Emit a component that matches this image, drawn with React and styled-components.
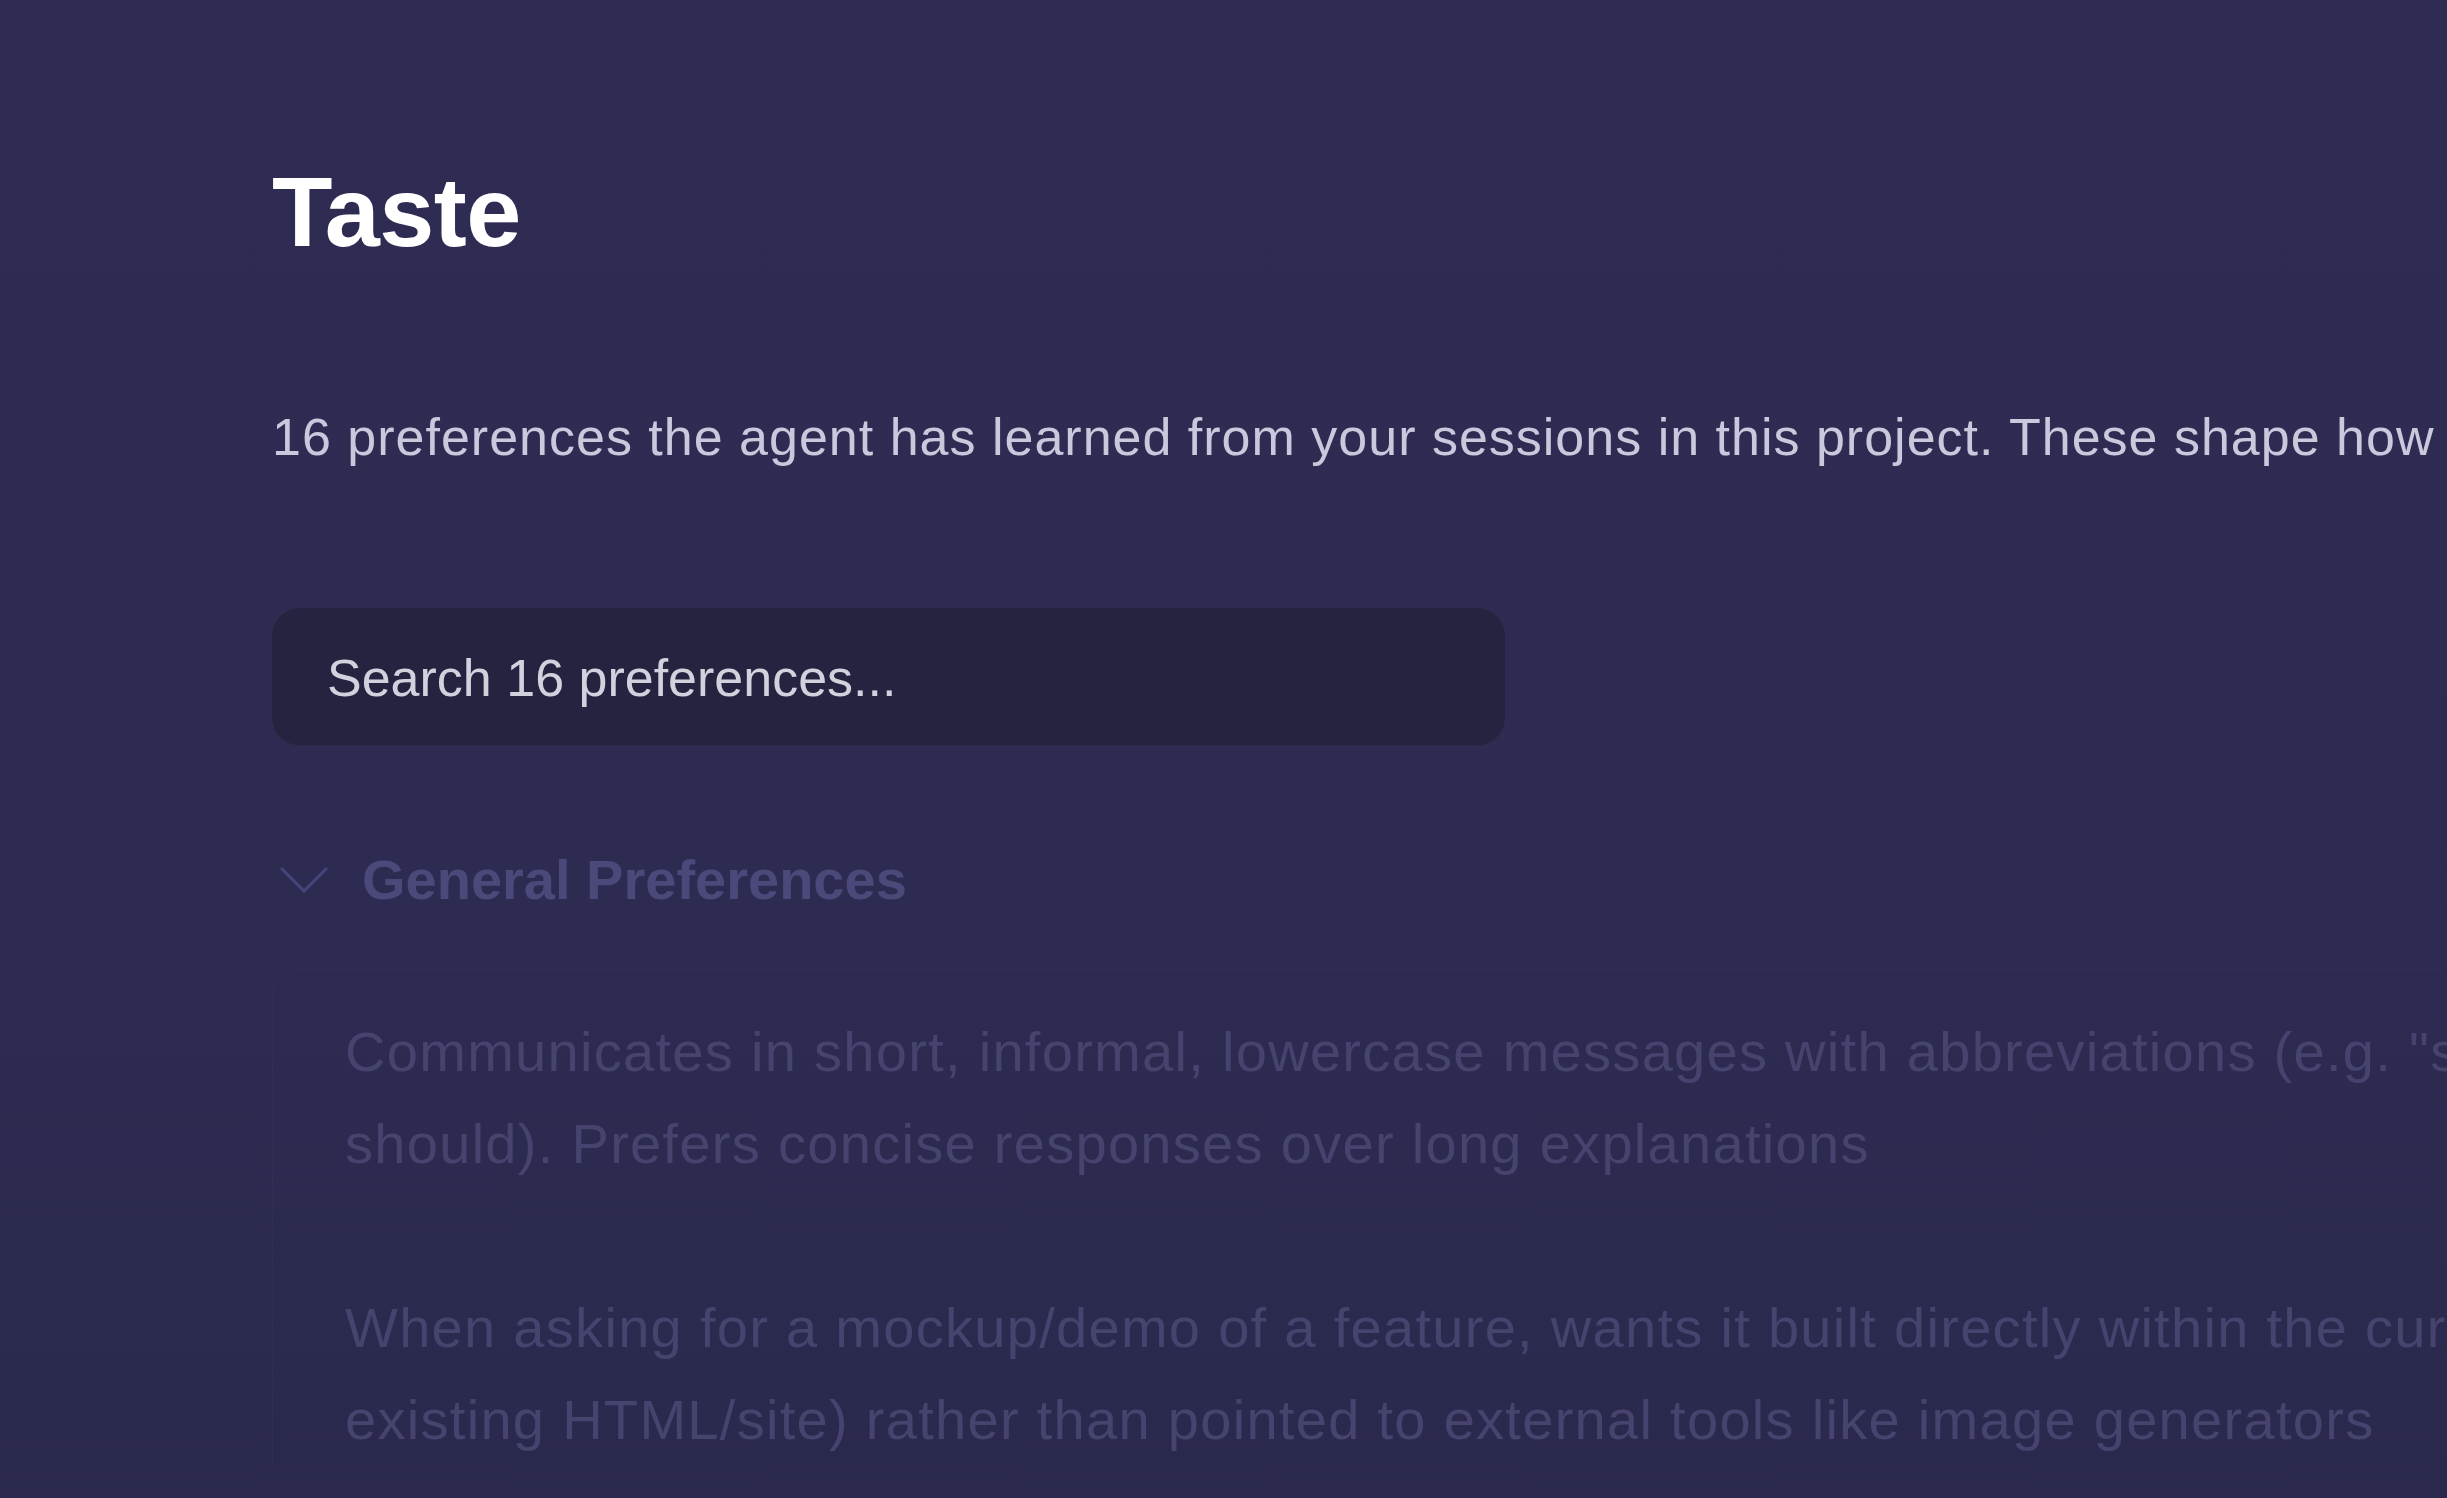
import React from "react";
import styled, { createGlobalStyle } from "styled-components";

const Global = createGlobalStyle`
  html, body {
    margin: 0;
    padding: 0;
    background: #2e2b52;
    overflow: hidden;
  }
  body {
    font-family: "Liberation Sans", Arial, sans-serif;
  }
`;

const Page = styled.main`
  width: 2447px;
  height: 1498px;
  overflow: hidden;
  background: linear-gradient(180deg, #2f2c54 0%, #2e2b52 60%, #2a294d 100%);
`;

const Content = styled.div`
  width: 2518px;
  padding: 153px 0 0 272px;
  display: flex;
  flex-direction: column;
`;

const Title = styled.h1`
  margin: 0;
  font-size: 99px;
  line-height: 1.2;
  font-weight: 700;
  letter-spacing: -0.5px;
  color: #ffffff;
`;

const Description = styled.p`
  margin: 129px 0 0;
  font-size: 52px;
  line-height: 1.4;
  letter-spacing: 1px;
  color: #c9c8dc;
  white-space: nowrap;
`;

const SearchBox = styled.div`
  margin-top: 134px;
  width: 1233px;
  height: 138px;
  box-sizing: border-box;
  padding: 5px 55px 0;
  display: flex;
  align-items: center;
  background: #25233f;
  border-radius: 28px;
  border-bottom: 1px solid rgba(255, 255, 255, 0.03);
`;

const SearchInput = styled.input`
  flex: 1;
  border: 0;
  outline: 0;
  background: transparent;
  font-family: inherit;
  font-size: 52px;
  line-height: 1.4;
  color: #d2d1de;
  padding: 0;
  &::placeholder {
    color: #d2d1de;
    opacity: 1;
  }
`;

const Section = styled.section`
  margin-top: 95px;
  display: flex;
  flex-direction: column;
`;

const SectionHeader = styled.div`
  display: flex;
  align-items: center;
  gap: 34px;
  padding-left: 8px;
`;

const SectionTitle = styled.h2`
  margin: 0;
  font-size: 56px;
  line-height: 1.4;
  font-weight: 700;
  color: #4b4979;
`;

const Card = styled.div`
  margin-top: 49px;
  border-left: 1px solid rgba(255, 255, 255, 0.02);
  border-top: 1px solid rgba(255, 255, 255, 0.015);
  border-radius: 28px 0 0 0;
  padding: 37px 0 0 72px;
  display: flex;
  flex-direction: column;
  gap: 92px;
`;

const Item = styled.p`
  margin: 0;
  font-size: 56px;
  line-height: 92px;
  letter-spacing: 1.3px;
  color: #46446f;
`;

const Chevron = () => (
  <svg width="48" height="28" viewBox="0 0 48 28" fill="none">
    <polyline
      points="2,3 24,25 46,3"
      stroke="#46447a"
      strokeWidth="3"
      strokeLinecap="round"
      strokeLinejoin="round"
    />
  </svg>
);

const items = [
  'Communicates in short, informal, lowercase messages with abbreviations (e.g. "sb" for should). Prefers concise responses over long explanations',
  "When asking for a mockup/demo of a feature, wants it built directly within the current UI (the existing HTML/site) rather than pointed to external tools like image generators",
];

export default function App() {
  return (
    <Page>
      <Global />
      <Content>
        <Title>Taste</Title>
        <Description>
          16 preferences the agent has learned from your sessions in this
          project. These shape how it responds.
        </Description>
        <SearchBox>
          <SearchInput placeholder="Search 16 preferences..." />
        </SearchBox>
        <Section>
          <SectionHeader>
            <Chevron />
            <SectionTitle>General Preferences</SectionTitle>
          </SectionHeader>
          <Card>
            {items.map((t, i) => (
              <Item key={i}>{t}</Item>
            ))}
          </Card>
        </Section>
      </Content>
    </Page>
  );
}
